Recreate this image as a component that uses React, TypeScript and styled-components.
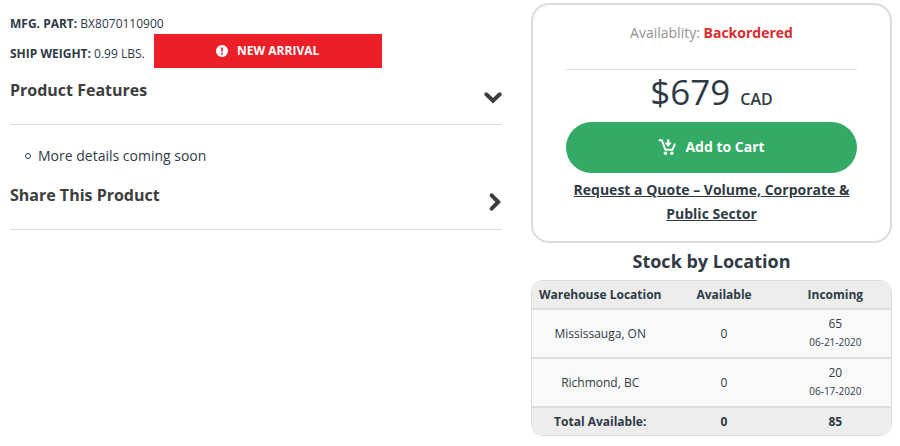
import React from "react";
import styled, { createGlobalStyle } from "styled-components";

const GlobalStyle = createGlobalStyle`
  *, *::before, *::after { box-sizing: border-box; }
  body {
    margin: 0;
    background: #fff;
    color: #2f3a45;
    font-family: "Open Sans", "Noto Sans", sans-serif;
    font-size: 14px;
  }
`;

const Page = styled.main`
  display: grid;
  grid-template-columns: minmax(0, 492fr) minmax(0, 361fr);
  align-items: start;
  gap: 29px;
  padding: 3px 8px 10px 10px;
`;

const Details = styled.section`
  padding-top: 6px;
`;

const Spec = styled.p`
  margin: 0;
  font-size: 12px;
  line-height: 30px;
`;

const SpecArea = styled.div`
  height: 59px;
`;

const SpecRow = styled.div`
  display: flex;
  align-items: flex-start;
  gap: 9px;
`;

const Flag = styled.span`
  display: flex;
  align-items: center;
  justify-content: center;
  flex: 0 1 228px;
  gap: 9px;
  height: 34px;
  margin-top: -5px;
  padding-bottom: 1px;
  background: #ea1f27;
  color: #fff;
  font-size: 12px;
  font-weight: 700;
`;

const SectionHeading = styled.h2`
  margin: 0;
  font-size: 16px;
  font-weight: 700;
  line-height: 44px;
`;

const Toggle = styled.button`
  display: flex;
  justify-content: space-between;
  align-items: flex-start;
  width: 100%;
  height: 57px;
  padding: 0;
  border: 0;
  border-bottom: 1px solid #dcdcdc;
  background: none;
  color: #3d3d3d;
  font: inherit;
  text-align: left;
  cursor: pointer;
`;

const ChevronBox = styled.svg`
  width: 18px;
  height: 18px;
  margin-top: 20px;
`;

const Features = styled.ul`
  margin: 0;
  padding: 20px 0 6px 15px;
  list-style: none;
  line-height: 22px;
`;

const Feature = styled.li`
  display: flex;
  align-items: center;
  gap: 7px;

  &::before {
    content: "";
    width: 6px;
    height: 6px;
    border: 1px solid #2f3a45;
    border-radius: 50%;
  }
`;

const BuyCard = styled.section`
  padding: 17px 33px 15px;
  border: 2px solid #dcdcdc;
  border-radius: 18px;
  text-align: center;
`;

const Availability = styled.p`
  margin: 0;
  padding-bottom: 25px;
  border-bottom: 1px solid #dedede;
  color: #929292;
  line-height: 22px;

  strong { color: #d92b2f; }
`;

const Price = styled.p`
  display: flex;
  align-items: baseline;
  justify-content: center;
  gap: 10px;
  margin: 0 0 8px;
  font-size: 35px;
  line-height: 44px;

  small { font-size: 16px; font-weight: 600; line-height: 16px; }
`;

const CartButton = styled.button`
  display: flex;
  align-items: center;
  justify-content: center;
  gap: 9px;
  width: 100%;
  height: 51px;
  margin-bottom: 5px;
  padding: 0 0 2px;
  border: 0;
  border-radius: 26px;
  background: #33aa65;
  color: #fff;
  font: inherit;
  font-weight: 700;
  cursor: pointer;
`;

const QuoteLink = styled.a`
  display: block;
  color: inherit;
  font-weight: 700;
  line-height: 24px;
`;

const StockTitle = styled.h2`
  margin: 0;
  font-size: 18px;
  font-weight: 700;
  line-height: 37px;
  text-align: center;
`;

const StockFrame = styled.div`
  overflow: hidden;
  border: 1px solid #dcdcdc;
  border-radius: 12px;
`;

const StockTable = styled.table`
  width: 100%;
  border-collapse: collapse;
  table-layout: fixed;
  background: #f9f9f9;
  font-size: 12px;
  line-height: 18px;
  text-align: center;

  th, td { padding: 0; }
  thead, tfoot { background: #ededed; font-weight: 700; }
  tbody tr { height: 49px; border-top: 2px solid #dedede; }
  thead tr { height: 28px; }
  tfoot tr { height: 28px; border-top: 2px solid #dedede; }
  tbody th { font-weight: 400; }
`;

const Column = styled.col<{ $share: number }>`
  width: ${({ $share }) => $share}%;
`;

const Arrival = styled.small`
  display: block;
  font-size: 10px;
  line-height: 19px;
`;

function Chevron({ open }: { open: boolean }) {
  return (
    <ChevronBox viewBox="0 0 18 18" fill="none" stroke="#3d3d3d" strokeWidth="4" strokeLinecap="round" aria-hidden="true">
      <path d={open ? "M2.3 6.3L9 12.8l6.7-6.5" : "M7.7 2.3L14.2 9l-6.5 6.7"} />
    </ChevronBox>
  );
}

function AlertIcon() {
  return (
    <svg width="12" height="12" viewBox="0 0 12 12" aria-hidden="true">
      <circle cx="6" cy="6" r="6" fill="#fff" />
      <path d="M5 2.5h2L6.7 6.8H5.3z" fill="#ea1f27" />
      <circle cx="6" cy="8.7" r="1" fill="#ea1f27" />
    </svg>
  );
}

function CartIcon() {
  return (
    <svg width="18" height="18" viewBox="0 0 18 18" fill="none" stroke="#fff" strokeWidth="2" aria-hidden="true">
      <path d="M.8 2.2h3l3.6 9.6h7L17 5.6" strokeLinejoin="round" />
      <path d="M10.2 1.5v5" strokeWidth="2.4" />
      <path d="M6.6 4.8h7.2l-3.6 4.1z" fill="#fff" stroke="none" />
      <circle cx="7.4" cy="15.2" r="1.8" fill="#fff" stroke="none" />
      <circle cx="13.8" cy="15.2" r="1.8" fill="#fff" stroke="none" />
    </svg>
  );
}

const stock = [
  { place: "Mississauga, ON", available: 0, incoming: 65, date: "06-21-2020" },
  { place: "Richmond, BC", available: 0, incoming: 20, date: "06-17-2020" },
];

export default function App() {
  const [featuresOpen, setFeaturesOpen] = React.useState(true);
  const [shareOpen, setShareOpen] = React.useState(false);

  return (
    <>
      <GlobalStyle />
      <Page>
        <Details>
          <SpecArea>
            <Spec><strong>MFG. PART:</strong> BX8070110900</Spec>
            <SpecRow>
              <Spec><strong>SHIP WEIGHT:</strong> 0.99 LBS.</Spec>
              <Flag><AlertIcon />NEW ARRIVAL</Flag>
            </SpecRow>
          </SpecArea>
          <SectionHeading>
            <Toggle aria-expanded={featuresOpen} onClick={() => setFeaturesOpen(!featuresOpen)}>
              Product Features
              <Chevron open={featuresOpen} />
            </Toggle>
          </SectionHeading>
          {featuresOpen && (
            <Features><Feature>More details coming soon</Feature></Features>
          )}
          <SectionHeading>
            <Toggle aria-expanded={shareOpen} onClick={() => setShareOpen(!shareOpen)}>
              Share This Product
              <Chevron open={shareOpen} />
            </Toggle>
          </SectionHeading>
        </Details>

        <aside>
          <BuyCard>
            <Availability>Availablity: <strong>Backordered</strong></Availability>
            <Price>$679 <small>CAD</small></Price>
            <CartButton><CartIcon />Add to Cart</CartButton>
            <QuoteLink href="#quote">Request a Quote – Volume, Corporate &amp; Public Sector</QuoteLink>
          </BuyCard>
          <StockTitle>Stock by Location</StockTitle>
          <StockFrame>
            <StockTable>
              <colgroup>
                <Column $share={38} />
                <Column $share={31} />
                <Column $share={31} />
              </colgroup>
              <thead>
                <tr>
                  <th scope="col">Warehouse Location</th>
                  <th scope="col">Available</th>
                  <th scope="col">Incoming</th>
                </tr>
              </thead>
              <tbody>
                {stock.map((row) => (
                  <tr key={row.place}>
                    <th scope="row">{row.place}</th>
                    <td>{row.available}</td>
                    <td>{row.incoming}<Arrival>{row.date}</Arrival></td>
                  </tr>
                ))}
              </tbody>
              <tfoot>
                <tr>
                  <th scope="row">Total Available:</th>
                  <td>0</td>
                  <td>85</td>
                </tr>
              </tfoot>
            </StockTable>
          </StockFrame>
        </aside>
      </Page>
    </>
  );
}
